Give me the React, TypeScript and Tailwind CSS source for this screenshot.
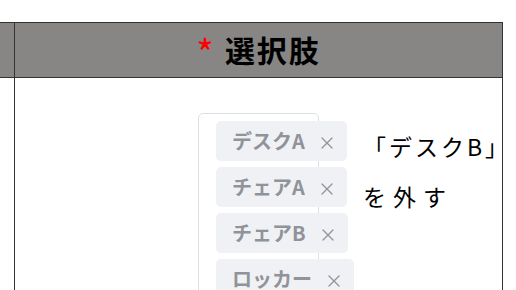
import React from "react";

const Close = () => (
  <svg width="12" height="12" viewBox="0 0 12 12" className="shrink-0">
    <path d="M1 1 L11 11 M11 1 L1 11" stroke="#909399" strokeWidth="1.3" strokeLinecap="round" />
  </svg>
);

const Tag = ({ label }: { label: string }) => (
  <div className="flex h-[40px] w-fit items-center whitespace-nowrap rounded-[5px] bg-[#f0f1f4] pl-4 pr-[14px]">
    <span className="text-[20px] font-bold leading-none text-[#909399]">{label}</span>
    <span className="ml-4 mt-[3px] flex">
      <Close />
    </span>
  </div>
);

export default function App() {
  return (
    <div
      className="h-[290px] w-[516px] overflow-hidden bg-white"
      style={{ fontFamily: '"Noto Sans CJK JP", "Noto Sans", sans-serif' }}
    >
      <div className="mt-[22px] w-[503px] border-r border-t border-[#333]">
        <div className="flex h-[55px] border-b border-[#333] bg-[#878684]">
          <div className="w-[15px] shrink-0 border-r border-[#333]" />
          <div className="flex min-w-0 flex-1 items-center justify-center pb-[3px] text-[30px] font-bold leading-none text-black">
            <span className="mr-[11px] mt-[6px] text-[38px] font-normal text-[#ff0000]">*</span>
            <span className="tracking-[2px]">選択肢</span>
          </div>
        </div>
        <div className="flex h-[220px]">
          <div className="w-[15px] shrink-0 border-r border-[#333]" />
          <div className="flex min-w-0 flex-1 items-start pl-[183px]">
            <div className="mt-[35px] flex h-[200px] w-[121px] shrink-0 flex-col gap-[6px] rounded-[5px] border border-[#dcdfe6] pl-[17px] pt-[7px]">
              <Tag label="デスクA" />
              <Tag label="チェアA" />
              <Tag label="チェアB" />
              <Tag label="ロッカー" />
            </div>
            <div className="ml-[44px] mt-[43px] shrink-0 whitespace-nowrap text-[23px] leading-[50px] text-black">
              <div className="tracking-[3px]">「デスクB」</div>
              <div className="tracking-[7px]">を外す</div>
            </div>
          </div>
        </div>
      </div>
    </div>
  );
}
